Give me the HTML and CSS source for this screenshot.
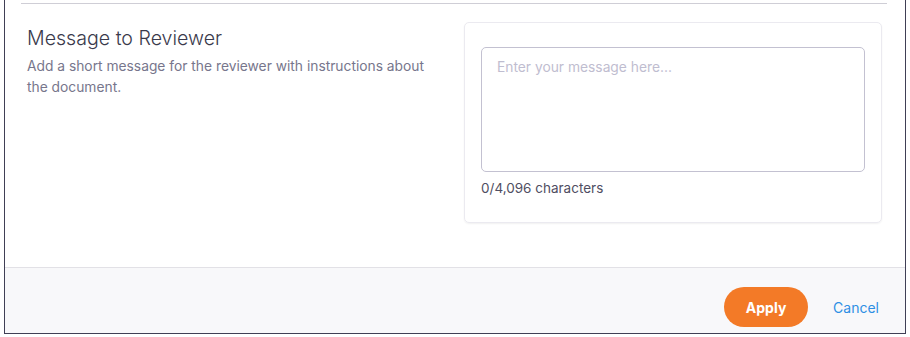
FILE: index.html
```html
<!DOCTYPE html>
<html lang="en">
  <head>
    <meta charset="UTF-8" />
    <meta name="viewport" content="width=device-width, initial-scale=1.0" />
    <title>Message to Reviewer</title>
    <link rel="stylesheet" href="styles.css">
  </head>
  <body>
    <div class="dialog">
      <div class="top-rule"></div>

      <div class="dialog-body">
        <!-- Left: heading and help text -->
        <div class="intro">
          <h2>Message to Reviewer</h2>
          <p>Add a short message for the reviewer with instructions about the document.</p>
        </div>

        <!-- Right: message box -->
        <div class="message-card">
          <textarea class="message-input" placeholder="Enter your message here..."></textarea>
          <div class="char-count">0/4,096 characters</div>
        </div>
      </div>

      <div class="dialog-footer">
        <button class="btn apply-btn">Apply</button>
        <button class="btn cancel-btn">Cancel</button>
      </div>
    </div>
  </body>
</html>
```

FILE: styles.css
```css
body {
  margin: 0;
  padding: 0;
  font-family: Inter, "Noto Sans", sans-serif;
  background-color: #ffffff;
}

.dialog {
  box-sizing: border-box;
  margin-left: 4px;
  width: 902px;
  height: 334px;
  border: 1px solid #403f55;
  border-top: none;
  display: flex;
  flex-direction: column;
}

.top-rule {
  height: 1px;
  margin: 3px 18px 0 16px;
  background-color: #cfced6;
}

.dialog-body {
  display: flex;
  height: 263px;
  box-sizing: border-box;
  padding: 18px 23px 0 22px;
}

.intro {
  flex: 1;
  padding-right: 30px;
}

.intro h2 {
  margin: 3px 0 0;
  font-size: 19.6px;
  font-weight: 300;
  line-height: 26px;
  color: #3a3a4c;
}

.intro p {
  margin: 5px 0 0;
  font-size: 13.8px;
  line-height: 21px;
  color: #77768c;
}

.message-card {
  box-sizing: border-box;
  width: 418px;
  height: 201px;
  padding: 24px 16px;
  border: 1px solid #ebeaf0;
  border-radius: 5px;
  box-shadow: 0 1px 2px rgba(0, 0, 0, 0.06);
}

.message-input {
  display: block;
  box-sizing: border-box;
  width: 384px;
  height: 125px;
  padding: 11px 15px;
  border: 1px solid #c3c1d1;
  border-radius: 5px;
  font-family: Inter, "Noto Sans", sans-serif;
  font-size: 13.8px;
  resize: none;
  outline: none;
}

.message-input::placeholder {
  color: #bfbdd0;
}

.char-count {
  margin-top: 7px;
  font-size: 13.5px;
  line-height: 18px;
  color: #4f4e62;
}

.dialog-footer {
  flex: 1;
  display: flex;
  align-items: flex-start;
  justify-content: flex-end;
  gap: 25px;
  padding: 19px 26px 0 0;
  border-top: 1px solid #e2e1e6;
  background-color: #f8f8fa;
}

.btn {
  font-family: Inter, "Noto Sans", sans-serif;
  font-size: 14px;
  border: none;
  cursor: pointer;
  background: none;
  padding: 0;
}

.apply-btn {
  width: 84px;
  height: 40px;
  border-radius: 20px;
  background-color: #f37a27;
  color: #ffffff;
  font-weight: 700;
}

.cancel-btn {
  height: 40px;
  color: #2e8fe4;
}
```
